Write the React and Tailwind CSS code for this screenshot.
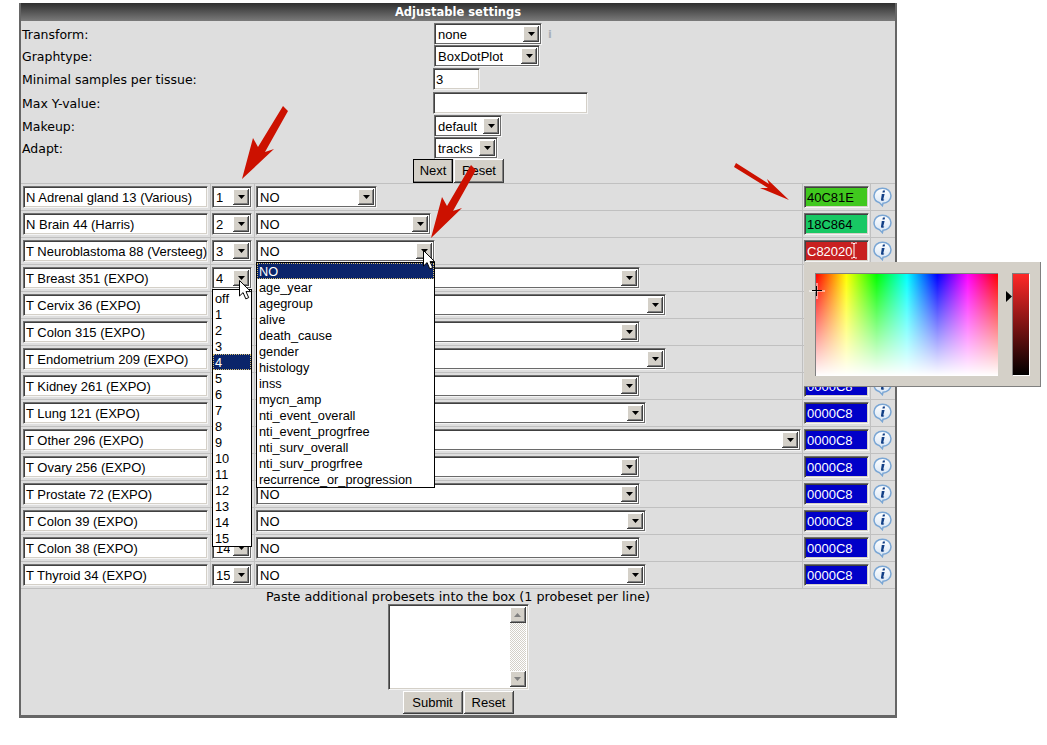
const SANS = "font-['Liberation_Sans',Arial,sans-serif]";
const DEJA = "font-['DejaVu_Sans',Verdana,sans-serif]";
const SUNKEN = "border border-t-[#707070] border-l-[#707070] border-b-[#f4f4f4] border-r-[#f4f4f4] shadow-[inset_1px_1px_0_#404040,inset_-1px_-1px_0_#d4d0c8]";
const SELECT_EDGE = "border border-t-[#707070] border-l-[#707070] border-b-[#f4f4f4] border-r-[#f4f4f4] shadow-[inset_1px_1px_0_#404040,inset_-1px_-1px_0_#6a6a6a]";
const RAISED = "bg-[#d4d0c8] shadow-[inset_-1px_-1px_0_#404040,inset_1px_1px_0_#fff,inset_-2px_-2px_0_#808080]";

function Arrow({ up = false, color = "#000" }) {
  return (
    <svg width="7" height="4" viewBox="0 0 7 4" className="block">
      <path d={up ? "M3.5 0L7 4H0Z" : "M0 0H7L3.5 4Z"} fill={color} />
    </svg>
  );
}

function Select({ value, className = "", width }) {
  return (
    <div
      style={width ? { width } : undefined}
      className={`relative flex h-[22px] shrink-0 items-center bg-white pl-[3px] text-[13px] leading-none text-black ${SANS} ${SELECT_EDGE} ${className}`}
    >
      <span className="truncate">{value}</span>
      <div className={`absolute top-[2px] right-[2px] bottom-[2px] flex w-[16px] items-center justify-center ${RAISED}`}>
        <Arrow />
      </div>
    </div>
  );
}

function Text({ value = "", className = "" }) {
  return (
    <div className={`flex h-[22px] shrink-0 items-center overflow-hidden pl-[2px] text-[13px] leading-none whitespace-nowrap ${SANS} ${SUNKEN} ${className}`}>
      {value}
    </div>
  );
}

function Btn({ children, className = "" }) {
  return (
    <div className={`flex items-center justify-center text-[13px] text-black ${SANS} ${RAISED} ${className}`}>{children}</div>
  );
}

function InfoIcon() {
  return (
    <svg width="19" height="20" viewBox="0 0 19 20" className="block">
      <defs>
        <linearGradient id="ig" x1="0" y1="0" x2="0" y2="1">
          <stop offset="0" stopColor="#ffffff" />
          <stop offset="1" stopColor="#d6e4f4" />
        </linearGradient>
      </defs>
      <path d="M9.5 1.2C4.7 1.2 1 4.6 1 8.8c0 3.3 2.4 6 5.6 7l2.8 2.9 .6-2.4c4.5-.1 8-3.4 8-7.5 0-4.2-3.7-7.6-8.5-7.6Z" fill="url(#ig)" stroke="#7aa6d4" strokeWidth="1.5" />
      <path d="M9.9 3.6h2.2l-.5 2h-2.2ZM9.2 7h2.4l-1.3 5.2c-.1.4.2.5.9.2l-.2.9c-1.5.9-3.2.7-3-.8L8.7 8c0-.2-.3-.2-.7-.1Z" fill="#123f86" />
    </svg>
  );
}

function Cursor({ className }) {
  return (
    <svg width="13" height="21" viewBox="0 0 13 21" className={`absolute ${className}`}>
      <path d="M.5.5V16l3.6-3.4 2.7 6.3 2.9-1.3-2.7-6h4.7Z" fill="#fff" stroke="#000" strokeWidth="1" />
    </svg>
  );
}

const rows = [
  ["N Adrenal gland 13 (Various)", "1", 121, "40C81E", "bg-[#40c81e] text-black"],
  ["N Brain 44 (Harris)", "2", 175, "18C864", "bg-[#18c864] text-black"],
  ["T Neuroblastoma 88 (Versteeg)", "3", 179, "C82020", "bg-[#c82020] text-white"],
  ["T Breast 351 (EXPO)", "4", 384],
  ["T Cervix 36 (EXPO)", "5", 410],
  ["T Colon 315 (EXPO)", "6", 384],
  ["T Endometrium 209 (EXPO)", "7", 410],
  ["T Kidney 261 (EXPO)", "8", 384],
  ["T Lung 121 (EXPO)", "9", 390],
  ["T Other 296 (EXPO)", "10", 545],
  ["T Ovary 256 (EXPO)", "11", 384],
  ["T Prostate 72 (EXPO)", "12", 384],
  ["T Colon 39 (EXPO)", "13", 390],
  ["T Colon 38 (EXPO)", "14", 384],
  ["T Thyroid 34 (EXPO)", "15", 390],
];

const topRows = [
  ["Transform:", "h-[22px]", <div className="-mt-px flex items-center"><Select value="none" className="w-[108px]" /><span className={`mt-[2px] ml-[6px] text-[11px] font-bold text-[#a8b0b8] ${DEJA}`}>i</span></div>],
  ["Graphtype:", "h-[23px]", <Select value="BoxDotPlot" className="-mt-px w-[106px]" />],
  ["Minimal samples per tissue:", "h-[24px]", <Text value="3" className="-mt-px -ml-px w-[47px] bg-white text-black" />],
  ["Max Y-value:", "h-[23px]", <Text className="-mt-px -ml-px w-[155px] bg-white" />],
  ["Makeup:", "h-[22px]", <Select value="default" className="-mt-px w-[68px]" />],
  ["Adapt:", "h-[21px]", <Select value="tracks" className="-mt-px w-[64px]" />],
];

const menu2 = ["NO","age_year","agegroup","alive","death_cause","gender","histology","inss","mycn_amp","nti_event_overall","nti_event_progrfree","nti_surv_overall","nti_surv_progrfree","recurrence_or_progression"];
const menu1 = ["off","1","2","3","4","5","6","7","8","9","10","11","12","13","14","15"];

function Menu({ items, active, className }) {
  return (
    <div className={`absolute border border-black bg-white text-[12.75px] leading-none text-black ${SANS} ${className}`}>
      {items.map((it) => (
        <div key={it} className={`flex h-[16px] items-center px-[2px] pt-[2px] whitespace-nowrap ${it === active ? "bg-[#0a246a] text-white outline-1 -outline-offset-1 outline-dotted outline-[#d8c070]" : ""}`}>{it}</div>
      ))}
    </div>
  );
}

export default function App() {
  return (
    <div className="relative h-[745px] w-[1047px] overflow-hidden bg-white">
      <div className="h-[3px]" />
      <div className="ml-[19px] h-[715px] w-[878px] border-x-2 border-b-[3px] border-[#666666] bg-[#dedede]">
        <div className={`flex h-[18px] items-center justify-center bg-[linear-gradient(to_bottom,#2f2f2f,#7a7a7a)] pt-px text-[11.5px] font-bold text-white ${DEJA}`}>
          Adjustable settings
        </div>
        <div className="h-[3px]" />
        {topRows.map(([label, h, control]) => (
          <div key={label} className={`flex items-start ${h}`}>
            <div className={`flex h-[21px] w-[413px] shrink-0 items-center pt-[2px] pl-[1px] text-[12.5px] text-black ${DEJA}`}>{label}</div>
            {control}
          </div>
        ))}
        <div className="flex h-[24px] pl-[392px]">
          <Btn className="h-[24px] w-[40px] outline-1 -outline-offset-1 outline-black">Next</Btn>
          <Btn className="ml-px h-[24px] w-[50px]">Reset</Btn>
        </div>
        {rows.map(([label, num, w, color, cls]) => (
          <div key={label} className="flex h-[27px] border-t border-[#c0c0c0]">
            <div className="flex w-[189px] items-center pl-[2px]">
              <Text value={label} className="w-[185px] bg-white text-black" />
            </div>
            <div className="flex w-[44px] items-center border-l border-[#c0c0c0] pl-[1px]">
              <Select value={num} className="w-[40px]" />
            </div>
            <div className="flex w-[548px] items-center border-l border-[#c0c0c0] pl-[1px]">
              <Select value="NO" width={w} />
            </div>
            <div className="flex w-[68px] items-center border-l border-[#c0c0c0] pl-[1px]">
              <Text value={color || "0000C8"} className={`w-[65px] ${cls || "bg-[#0000c8] text-white"}`} />
            </div>
            <div className="flex flex-1 items-center border-l border-[#c0c0c0] pl-[2px]">
              <InfoIcon />
            </div>
          </div>
        ))}
        <div className="border-t border-[#c0c0c0]" />
        <div className={`flex h-[15px] items-center justify-center pt-[2px] text-[12.75px] leading-none text-black ${DEJA}`}>
          Paste additional probesets into the box (1 probeset per line)
        </div>
        <div className="flex justify-center">
          <div className={`flex h-[86px] w-[141px] bg-white p-[2px] ${SUNKEN}`}>
            <div className="flex-1" />
            <div className="flex w-[16px] flex-col bg-[repeating-conic-gradient(#d4d0c8_0_25%,#ffffff_0_50%)] bg-[length:2px_2px]">
              <div className={`flex h-[16px] items-center justify-center ${RAISED}`}><Arrow up color="#808080" /></div>
              <div className="flex-1" />
              <div className={`flex h-[16px] items-center justify-center ${RAISED}`}><Arrow color="#808080" /></div>
            </div>
          </div>
        </div>
        <div className="mt-px flex justify-center">
          <Btn className="h-[23px] w-[60px]">Submit</Btn>
          <Btn className="ml-px h-[23px] w-[50px]">Reset</Btn>
        </div>
      </div>

      <Menu items={menu1} active="4" className="top-[289px] left-[212px] w-[40px]" />
      <Menu items={menu2} active="NO" className="top-[262px] left-[256px] w-[179px]" />

      <div className="absolute top-[262px] left-[804px] h-[125px] w-[237px] border-r border-b border-[#808080] bg-[#d4d0c8]">
        <div className="absolute top-[11px] left-[11px] h-[103px] w-[183px] border-t border-l border-[#808080] bg-[linear-gradient(to_right,#f00,#ff0,#0f0,#0ff,#00f,#f0f,#f00)]">
          <div className="h-full w-full bg-[linear-gradient(to_bottom,rgba(255,255,255,0),#fff)]" />
        </div>
        <div className="absolute top-[11px] left-[208px] h-[103px] w-[18px] border border-[#808080] border-r-white border-b-white bg-[linear-gradient(to_bottom,#ff2828,#000)]" />
        <svg width="6" height="11" viewBox="0 0 6 11" className="absolute top-[29px] left-[202px]"><path d="M0 0L6 5.5 0 11Z" fill="#000" /></svg>
        <svg width="16" height="16" viewBox="0 0 16 16" className="absolute top-[21px] left-[5px]"><path d="M8 0V16M0 8H16" stroke="#fff" strokeWidth="1" /><path d="M7.5 3v10M3 7.5h10" stroke="#000" strokeWidth="1" /></svg>
      </div>

      <svg width="1047" height="745" viewBox="0 0 1047 745" className="pointer-events-none absolute top-0 left-0">
        <path d="M283 106L288 111 265 152 274 149 242 179 253 138 258 147Z" fill="#cc1100" />
        <path d="M471 165L476 170 453 211 462 208 431 238 442 197 447 206Z" fill="#cc1100" />
        <path d="M736 163L734 167 768 188 760 188 789 200 767 179 769 184Z" fill="#cc1100" />
        <path d="M851 243h2l1 1 1-1h2M854 244V257M851 258h2l1-1 1 1h2" stroke="#fff" strokeWidth="1" fill="none" />
      </svg>
      <Cursor className="top-[250px] left-[423px]" />
      <Cursor className="top-[280px] left-[239px]" />
    </div>
  );
}
